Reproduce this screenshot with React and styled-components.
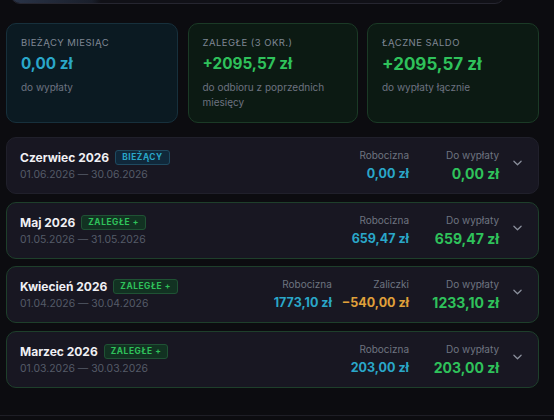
import React from 'react'
import styled, { createGlobalStyle } from 'styled-components'

const Global = createGlobalStyle`
  html, body { margin: 0; padding: 0; background: #0c0c10; }
  body { font-family: Inter, "Noto Sans", sans-serif; color: #e8e8ee; }
`

const summary = [
    { label: 'BIEŻĄCY MIESIĄC', value: '0,00 zł', note: 'do wypłaty', tone: 'blue' },
    { label: 'ZALEGŁE (3 OKR.)', value: '+2095,57 zł', note: 'do odbioru z poprzednich miesięcy', tone: 'green' },
    { label: 'ŁĄCZNE SALDO', value: '+2095,57 zł', note: 'do wypłaty łącznie', tone: 'green', total: true },
]

const months = [
    { name: 'Czerwiec 2026', badge: 'BIEŻĄCY', current: true, range: '01.06.2026 — 30.06.2026', labor: '0,00 zł', pay: '0,00 zł' },
    { name: 'Maj 2026', badge: 'ZALEGŁE +', range: '01.05.2026 — 31.05.2026', labor: '659,47 zł', pay: '659,47 zł' },
    { name: 'Kwiecień 2026', badge: 'ZALEGŁE +', range: '01.04.2026 — 30.04.2026', labor: '1773,10 zł', advance: '−540,00 zł', pay: '1233,10 zł' },
    { name: 'Marzec 2026', badge: 'ZALEGŁE +', range: '01.03.2026 — 30.03.2026', labor: '203,00 zł', pay: '203,00 zł' },
]

function App() {
    return (
        <Page>
            <Global />
            <TopPanel><TopFill /></TopPanel>

            <Cards>
                {summary.map((s) => (
                    <Card key={s.label} tone={s.tone}>
                        <CardLabel>{s.label}</CardLabel>
                        <CardValue tone={s.tone} total={s.total}>{s.value}</CardValue>
                        <CardNote>{s.note}</CardNote>
                    </Card>
                ))}
            </Cards>

            <Rows>
                {months.map((m) => (
                    <Row key={m.name} current={m.current}>
                        <RowInfo>
                            <TitleLine>
                                <Title>{m.name}</Title>
                                <Badge current={m.current}>{m.badge}</Badge>
                            </TitleLine>
                            <Range>{m.range}</Range>
                        </RowInfo>

                        <Amounts>
                            <Amount>
                                <AmountLabel>Robocizna</AmountLabel>
                                <AmountValue tone="blue">{m.labor}</AmountValue>
                            </Amount>
                            {m.advance &&
                                <Amount>
                                    <AmountLabel>Zaliczki</AmountLabel>
                                    <AmountValue tone="orange">{m.advance}</AmountValue>
                                </Amount>}
                            <Amount wide>
                                <AmountLabel>Do wypłaty</AmountLabel>
                                <AmountValue tone="green" big>{m.pay}</AmountValue>
                            </Amount>
                        </Amounts>

                        <Chevron viewBox="0 0 10 6">
                            <path d="M1 1l4 4 4-4" fill="none" stroke="#8a8f9c" strokeWidth="1.4" strokeLinecap="round" strokeLinejoin="round" />
                        </Chevron>
                    </Row>
                ))}
            </Rows>

            <Divider />
        </Page>
    )
}

const tones = {
    blue: '#2aa7c9',
    green: '#2fc25b',
    orange: '#e0a13a',
}

const Page = styled.div`
  width: 554px;
  height: 420px;
  overflow: hidden;
`

const TopPanel = styled.div`
  height: 20px;
  margin: -18px 49px 0 10px;
  border: 1px solid #262630;
  border-radius: 10px;
  background: #111117;
  overflow: hidden;
  position: relative;
`

const TopFill = styled.div`
  position: absolute;
  left: 0;
  bottom: 0;
  width: 90px;
  height: 100%;
  background: linear-gradient(90deg, #2a3448, #1a1f2b 90%, transparent);
`

const Cards = styled.div`
  display: grid;
  grid-template-columns: 172px 170px 172px;
  column-gap: 9.5px;
  margin: 19px 0 0 6px;
`

const Card = styled.div`
  height: 100px;
  box-sizing: border-box;
  padding: 13px 14px;
  border-radius: 10px;
  border: 1px solid ${(p) => (p.tone === 'blue' ? '#17303c' : '#1b3a26')};
  background: ${(p) => (p.tone === 'blue' ? '#0b1a22' : '#0c1a13')};
`

const CardLabel = styled.div`
  font-size: 9.5px;
  letter-spacing: 0.45px;
  color: #7f8794;
  line-height: 12px;
`

const CardValue = styled.div`
  margin-top: 5px;
  font-size: ${(p) => (p.total ? '17px' : '15.3px')};
  font-weight: 700;
  line-height: 20px;
  color: ${(p) => tones[p.tone]};
`

const CardNote = styled.div`
  margin-top: 6px;
  font-size: 10px;
  line-height: 15px;
  color: #6c7280;
  padding-right: 10px;
`

const Rows = styled.div`
  display: flex;
  flex-direction: column;
  gap: 7.5px;
  margin: 14px 15px 0 6px;
`

const Row = styled.div`
  height: 57px;
  box-sizing: border-box;
  display: flex;
  align-items: center;
  padding: 0 16px 0 13px;
  border-radius: 10px;
  background: #181722;
  border: 1px solid ${(p) => (p.current ? '#20202b' : '#1e3f2b')};
`

const RowInfo = styled.div`
  flex: 1;
  display: flex;
  flex-direction: column;
  gap: 2px;
`

const TitleLine = styled.div`
  display: flex;
  align-items: center;
  gap: 6px;
`

const Title = styled.span`
  font-size: 12px;
  font-weight: 700;
  color: #f0f0f4;
  line-height: 17px;
`

const Badge = styled.span`
  font-size: 8.3px;
  font-weight: 700;
  letter-spacing: 0.6px;
  line-height: 11px;
  padding: 1px 6px;
  border-radius: 3px;
  color: ${(p) => (p.current ? '#2aa7c9' : '#2fc25b')};
  background: ${(p) => (p.current ? '#10283a' : '#123222')};
  border: 1px solid ${(p) => (p.current ? '#1e4a60' : '#1f5234')};
`

const Range = styled.span`
  font-size: 10.4px;
  color: #555b68;
  line-height: 14px;
`

const Amounts = styled.div`
  display: flex;
  align-items: center;
  gap: 10px;
`

const Amount = styled.div`
  display: flex;
  flex-direction: column;
  align-items: flex-end;
  gap: 3px;
  min-width: ${(p) => (p.wide ? '80px' : '64px')};
`

const AmountLabel = styled.span`
  font-size: 10px;
  color: #6e7480;
  line-height: 13px;
`

const AmountValue = styled.span`
  font-size: ${(p) => (p.big ? '14px' : '12.5px')};
  font-weight: 700;
  line-height: 17px;
  color: ${(p) => tones[p.tone]};
`

const Chevron = styled.svg`
  width: 9px;
  height: 6px;
  margin: 0 0 5px 14px;
`

const Divider = styled.div`
  margin-top: 27px;
  height: 1px;
  background: #1e1e26;
`

export default App
